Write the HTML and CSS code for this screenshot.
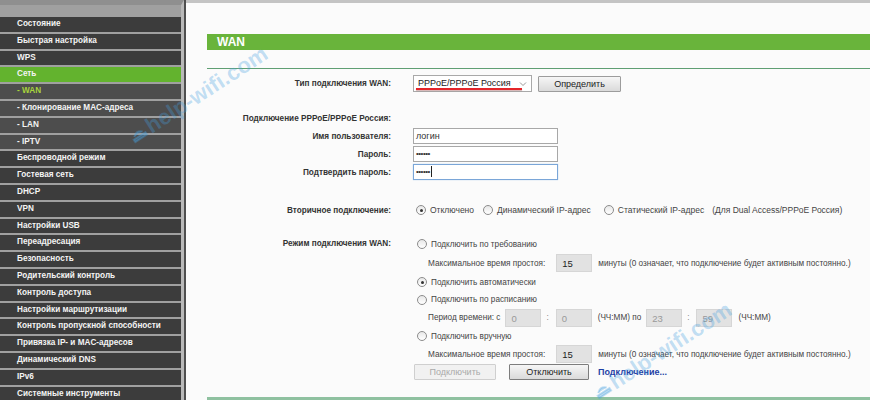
FILE: index.html
```html
<!DOCTYPE html>
<html lang="ru">
<head>
    <meta charset="UTF-8">
    <title>WAN</title>
    <link rel="stylesheet" href="styles.css">
</head>
<body>

<div class="page">
    <div class="side">
        <ul class="menu">
            <li>Состояние</li>
            <li>Быстрая настройка</li>
            <li>WPS</li>
            <li class="active">Сеть</li>
            <li class="sub current">- WAN</li>
            <li class="sub">- Клонирование MAC-адреса</li>
            <li class="sub">- LAN</li>
            <li class="sub">- IPTV</li>
            <li>Беспроводной режим</li>
            <li>Гостевая сеть</li>
            <li>DHCP</li>
            <li>VPN</li>
            <li>Настройки USB</li>
            <li>Переадресация</li>
            <li>Безопасность</li>
            <li>Родительский контроль</li>
            <li>Контроль доступа</li>
            <li>Настройки маршрутизации</li>
            <li>Контроль пропускной способности</li>
            <li>Привязка IP- и MAC-адресов</li>
            <li>Динамический DNS</li>
            <li>IPv6</li>
            <li>Системные инструменты</li>
        </ul>
    </div>

    <div class="main">
        <div class="main-head">WAN</div>
        <div class="rule"></div>

        <div class="row row-type">
            <div class="lbl">Тип подключения WAN:</div>
            <div class="select">
                PPPoE/PPPoE Россия
                <svg class="arrow" width="8" height="6" viewBox="0 0 8 6"><path d="M1 1.5 L4 4.5 L7 1.5" fill="none" stroke="#999" stroke-width="1"/></svg>
                <span class="mark"></span>
            </div>
            <button class="btn btn-detect">Определить</button>
        </div>

        <div class="row row-title">
            <div class="lbl">Подключение PPPoE/PPPoE Россия:</div>
        </div>
        <div class="row row-field first">
            <div class="lbl">Имя пользователя:</div>
            <div class="input">логин</div>
        </div>
        <div class="row row-field">
            <div class="lbl">Пароль:</div>
            <div class="input dots">••••••</div>
        </div>
        <div class="row row-field">
            <div class="lbl">Подтвердить пароль:</div>
            <div class="input dots focus">••••••<span class="caret"></span></div>
        </div>

        <div class="row row-second">
            <div class="lbl">Вторичное подключение:</div>
            <span class="radio on first"></span><span class="opt-text">Отключено</span>
            <span class="radio r2"></span><span class="opt-text">Динамический IP-адрес</span>
            <span class="radio r3"></span><span class="opt-text">Статический IP-адрес</span>
            <span class="note">(Для Dual Access/PPPoE Россия)</span>
        </div>

        <div class="mode">
            <div class="lbl mode-lbl">Режим подключения WAN:</div>
            <div class="opts">
                <div class="opt h18"><span class="radio"></span>Подключить по требованию</div>
                <div class="opt h20 indent">
                    Максимальное время простоя:
                    <span class="num idle">15</span>
                    <span class="hint">минуты (0 означает, что подключение будет активным постоянно.)</span>
                </div>
                <div class="opt h18"><span class="radio on"></span>Подключить автоматически</div>
                <div class="opt h17"><span class="radio"></span>Подключить по расписанию</div>
                <div class="opt h19 indent">
                    Период времени: с
                    <span class="num off t1">0</span><span class="colon">:</span>
                    <span class="num off">0</span>
                    <span class="hint">(ЧЧ:ММ) по</span>
                    <span class="num off t3">23</span><span class="colon">:</span>
                    <span class="num off">59</span>
                    <span class="hint">(ЧЧ:ММ)</span>
                </div>
                <div class="opt h18"><span class="radio"></span>Подключить вручную</div>
                <div class="opt h18 indent">
                    Максимальное время простоя:
                    <span class="num idle">15</span>
                    <span class="hint">минуты (0 означает, что подключение будет активным постоянно.)</span>
                </div>
                <div class="opt h18 actions">
                    <button class="btn btn-off" disabled>Подключить</button>
                    <button class="btn btn-disc">Отключить</button>
                    <a class="link" href="#">Подключение...</a>
                </div>
            </div>
        </div>

        <div class="bottom-rule"></div>
    </div>
</div>

<div class="wm wm1"><svg width="18" height="14" viewBox="0 0 18 14"><path d="M2 12 L16 12 L16 9 L2 9 Z M4 7 Q9 2 14 7" fill="currentColor" stroke="currentColor" stroke-width="2"/></svg>help-wifi.com</div>
<div class="wm wm2"><svg width="18" height="14" viewBox="0 0 18 14"><path d="M2 12 L16 12 L16 9 L2 9 Z M4 7 Q9 2 14 7" fill="currentColor" stroke="currentColor" stroke-width="2"/></svg>help-wifi.com</div>

</body>
</html>
```

FILE: styles.css
```css
body { margin: 0; font-family: "Liberation Sans", Arial, sans-serif; font-size: 8.2px; color: #333; background: #fbfbfb; overflow: hidden; }
.page { display: flex; height: 400px; overflow: hidden; }

.side { flex: none; border-right: 2px solid #4f4f4f; }
.menu { list-style: none; margin: 0; padding: 12px 0 0; width: 184px; height: 400px; box-sizing: border-box; background: #a0a0a0; border-right: 3px solid #b9b9b9; border-top: 5px solid #8f8f8f; }
.menu li { height: 14.8px; line-height: 14.8px; margin-bottom: 2px; padding-left: 17px; background: #3c3c3c; color: #f4f4f4; font-weight: bold; font-size: 8.2px; white-space: nowrap; }
.menu li.sub { background: #4d4d4d; }
.menu li.active { background: #63b32e; }
.menu li.current { color: #a8d43c; }

.main { flex: 1; border-top: 3px solid #c4c4c4; padding-left: 21px; position: relative; }
.main-head { margin-top: 31px; height: 16px; line-height: 16px; background: #69b43b; color: #fff; font-weight: bold; font-size: 12px; padding-left: 10px; }
.rule { margin-top: 18px; border-top: 1px solid #5f9f73; }

.row { display: flex; align-items: center; height: 18px; }
.lbl { width: 184px; flex: none; margin-right: 22px; text-align: right; font-weight: bold; font-size: 8.2px; color: #333; white-space: nowrap; }
.row-type { margin-top: 6px; height: 17px; }
.row-title { margin-top: 19px; height: 14px; }
.row-field.first { margin-top: 2px; }
.row-second { margin-top: 20px; font-size: 8.5px; }

.select { position: relative; width: 113px; height: 15px; line-height: 15px; border: 1px solid #a9a9a9; background: #fff; font-size: 9px; color: #222; padding-left: 4px; white-space: nowrap; }
.select .arrow { position: absolute; right: 4px; top: 5px; }
.select .mark { position: absolute; left: 2px; top: 12px; width: 106px; height: 2px; background: #e3262b; box-shadow: 0 1px 1px rgba(120, 0, 0, 0.3); }

.btn { font-family: "Liberation Sans", Arial, sans-serif; font-size: 9px; color: #222; height: 16px; padding: 0; border: 1px solid #9c9c9c; border-radius: 1px; background: linear-gradient(#f6f6f6, #dadada); }
.btn-detect { width: 83px; margin-left: 6px; }
.btn-off { width: 82px; color: #aaa; border-color: #cfcfcf; background: #f1f1f1; }
.btn-disc { width: 80px; margin-left: 13px; border-color: #7d7d7d; }
.link { margin-left: 9px; color: #1f3fa5; font-weight: bold; font-size: 9px; text-decoration: none; }

.input { width: 141px; height: 14px; line-height: 14px; border: 1px solid #a8a8a8; background: #fff; font-size: 9px; color: #333; padding-left: 2px; }
.input.dots { font-size: 8px; letter-spacing: -0.5px; }
.input.focus { border-color: #7aa6d8; box-shadow: 0 0 1px #a8c8ec; }
.caret { display: inline-block; width: 1px; height: 11px; background: #222; vertical-align: middle; margin-left: 1px; }

.radio { display: inline-block; flex: none; width: 8px; height: 8px; border: 1px solid #8c8c8c; border-radius: 50%; background: linear-gradient(#e8e8e8, #fff); position: relative; margin: 0 4px 0 4px; }
.radio.on::after { content: ""; position: absolute; left: 2.5px; top: 2.5px; width: 3px; height: 3px; border-radius: 50%; background: #333; }
.radio.first { margin-left: 3px; }
.radio.r2 { margin-left: 9px; }
.radio.r3 { margin-left: 13px; }
.opt-text { color: #444; }
.note { margin-left: 8px; color: #444; }

.mode { display: flex; margin-top: 16px; }
.mode-lbl { height: 18px; line-height: 18px; }
.opts { display: flex; flex-direction: column; }
.opt { display: flex; align-items: center; color: #444; white-space: nowrap; }
.opt.indent { padding-left: 15px; }
.opt.actions { padding-left: 1px; }
.h17 { height: 17px; }
.h18 { height: 18px; }
.h19 { height: 19px; }
.h20 { height: 20px; }

.num { display: inline-block; width: 36px; height: 18px; line-height: 18px; background: #e2e2e2; border: 1px solid #d6d6d6; box-sizing: border-box; padding-left: 5px; font-size: 9.5px; color: #222; }
.num.idle { margin-left: 11px; }
.num.off { color: #999; }
.num.t1 { margin-left: 5px; }
.num.t3 { margin-left: 5px; }
.colon { margin: 0 7px 0 5px; color: #888; }
.hint { margin-left: 6px; }

.bottom-rule { position: absolute; left: 21px; right: 0; top: 394px; border-top: 3px solid #8fc1a0; }

.wm { position: absolute; color: rgba(70, 160, 225, 0.33); font-weight: bold; font-size: 22px; white-space: nowrap; transform: rotate(-33deg); transform-origin: left bottom; display: flex; align-items: center; gap: 2px; }
.wm1 { left: 138px; top: 124px; }
.wm2 { left: 602px; top: 380px; }
```
